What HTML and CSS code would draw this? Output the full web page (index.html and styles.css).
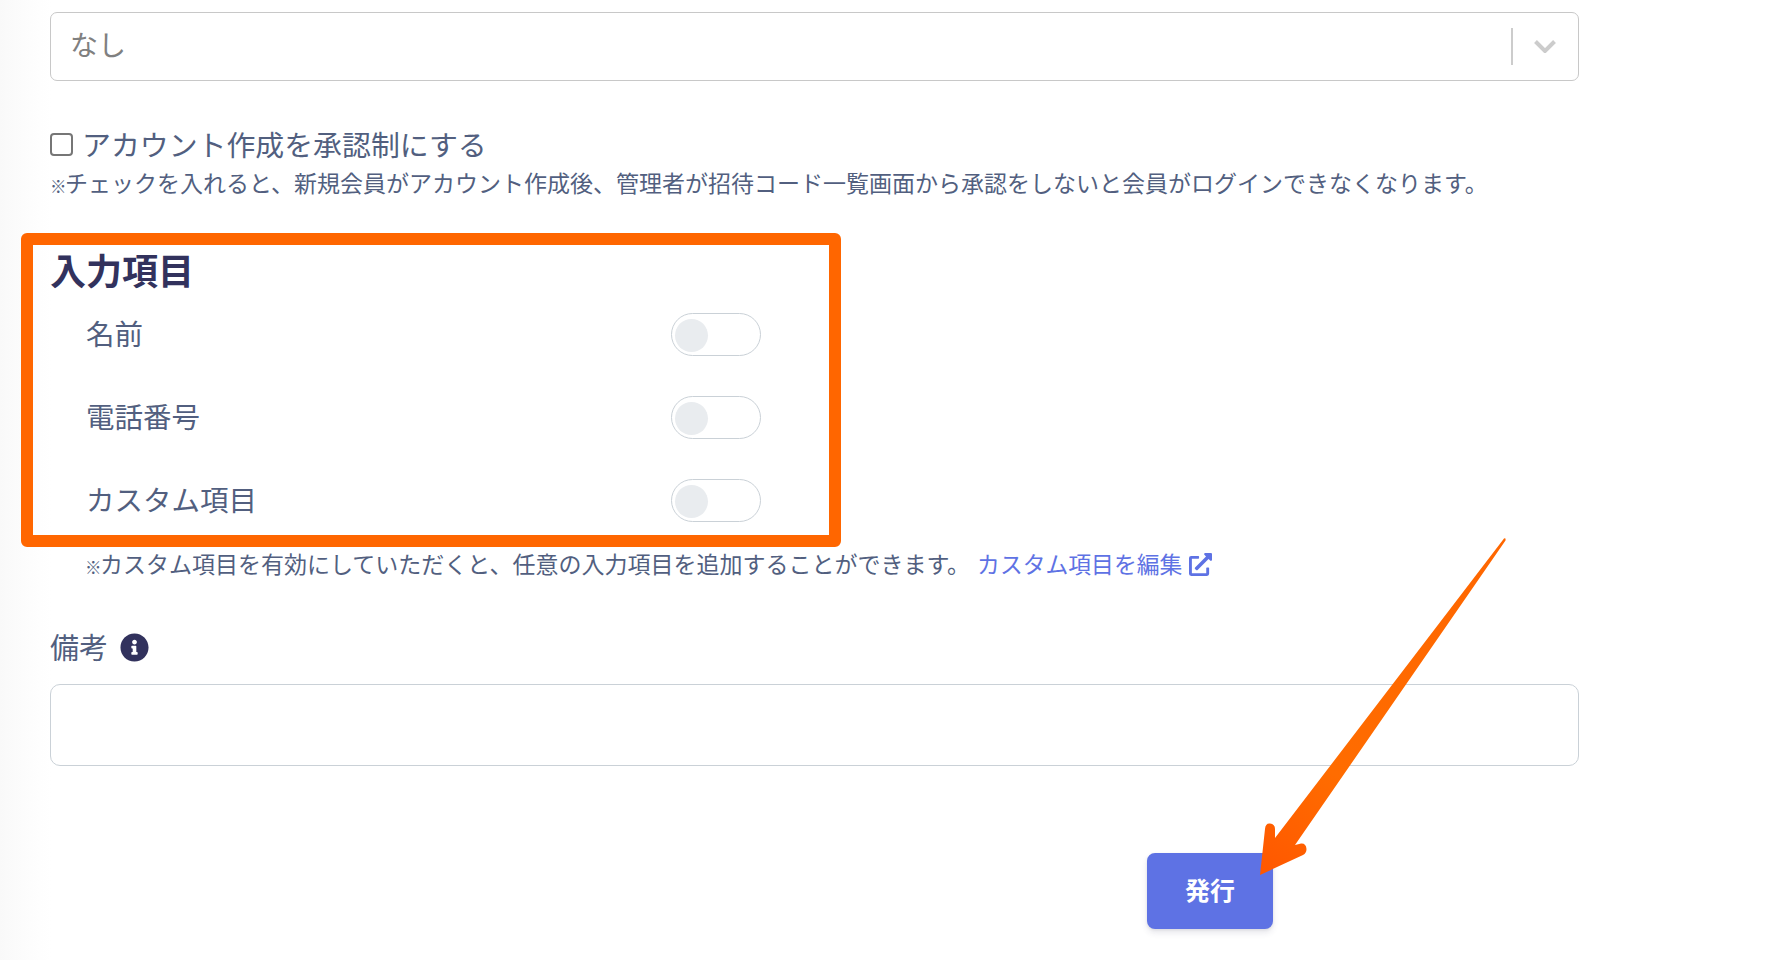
FILE: index.html
```html
<!DOCTYPE html>
<html lang="ja">
<head>
<meta charset="utf-8">
<title>招待コード発行</title>
<link rel="stylesheet" href="styles.css">
</head>
<body>
<main class="page">
  <form class="form">
    <div class="select">
      <span class="select-value">なし</span>
      <span class="select-divider"></span>
      <svg class="select-chevron" viewBox="0 0 22 13" aria-hidden="true"><path d="M1.500 1.500l9.500 9.500 9.500-9.500" fill="none" stroke="#cccccc" stroke-width="4"/></svg>
    </div>

    <label class="check-row">
      <input class="check" type="checkbox">
      <span class="check-text">アカウント作成を承認制にする</span>
    </label>
    <p class="note"><span class="mark">※</span>チェックを入れると、新規会員がアカウント作成後、管理者が招待コード一覧画面から承認をしないと会員がログインできなくなります。</p>

    <h2 class="heading">入力項目</h2>
    <div class="fields">
      <div class="field-row"><span class="field-name">名前</span><span class="toggle"><span class="knob"></span></span></div>
      <div class="field-row"><span class="field-name">電話番号</span><span class="toggle"><span class="knob"></span></span></div>
      <div class="field-row"><span class="field-name">カスタム項目</span><span class="toggle"><span class="knob"></span></span></div>
    </div>
    <p class="note note-indent"><span class="mark">※</span>カスタム項目を有効にしていただくと、任意の入力項目を追加することができます。<a class="link" href="#">カスタム項目を編集<svg class="link-icon" viewBox="0 0 512 512" aria-hidden="true"><path fill="currentColor" d="M432,320H400a16,16,0,0,0-16,16V448H64V128H208a16,16,0,0,0,16-16V80a16,16,0,0,0-16-16H48A48,48,0,0,0,0,112V464a48,48,0,0,0,48,48H400a48,48,0,0,0,48-48V336A16,16,0,0,0,432,320ZM488,0h-128c-21.37,0-32.05,25.91-17,41l35.73,35.73L135,320.37a24,24,0,0,0,0,34L157.67,377a24,24,0,0,0,34,0L435.28,133.32,471,169c15,15,41,4.5,41-17V24A24,24,0,0,0,488,0Z"/></svg></a></p>

    <div class="memo-label">
      <span class="memo-name">備考</span>
      <svg class="info-icon" viewBox="0 0 512 512" aria-hidden="true"><path fill="#32325d" d="M256 8C119.043 8 8 119.083 8 256c0 136.997 111.043 248 248 248s248-111.003 248-248C504 119.083 392.957 8 256 8zm0 110c23.196 0 42 18.804 42 42s-18.804 42-42 42-42-18.804-42-42 18.804-42 42-42zm56 254c0 6.627-5.373 12-12 12h-88c-6.627 0-12-5.373-12-12v-24c0-6.627 5.373-12 12-12h12v-64h-12c-6.627 0-12-5.373-12-12v-24c0-6.627 5.373-12 12-12h64c6.627 0 12 5.373 12 12v100h12c6.627 0 12 5.373 12 12v24z"/></svg>
    </div>
    <div class="memo-input"></div>

    <div class="actions">
      <button class="submit" type="button">発行</button>
    </div>
  </form>

  <div class="highlight"></div>
  <svg class="arrow" viewBox="0 0 1782 960" aria-hidden="true">
    <defs>
      <linearGradient id="arrowFill" gradientUnits="userSpaceOnUse" x1="1505" y1="539" x2="1260" y2="875">
        <stop offset="0" stop-color="#ff6600"/>
        <stop offset="0.7" stop-color="#ff6c00"/>
        <stop offset="1" stop-color="#ff5700"/>
      </linearGradient>
    </defs>
    <path fill="url(#arrowFill)" d="M1504 538.500Q1506 537.500 1505.500 540.500L1295 845L1301 843.500Q1306 843 1306.500 849Q1306.500 853 1303 855L1260 875L1265 829Q1265.500 823 1270 823.500Q1275 824 1275 829L1275 838Z"/>
  </svg>
</main>
</body>
</html>
```

FILE: styles.css
```css
* {
  box-sizing: border-box;
}

html,
body {
  margin: 0;
  height: 100%;
}

body {
  overflow: hidden;
  background: #ffffff;
  color: #525f7f;
  font-family: "Noto Sans CJK JP", "Noto Sans", sans-serif;
  font-size: 28.5px;
}

.page {
  position: relative;
  height: 960px;
  padding: 12px 0 0 50px;
  background: linear-gradient(90deg, #f9f9f9 0, #fbfbfb 14px, #fefefe 40px, #ffffff 52px);
}

.form {
  width: 1529px;
}

.select {
  display: flex;
  align-items: center;
  height: 69px;
  padding: 0 22px 0 19px;
  border: 1px solid #c8c8c8;
  border-radius: 7px;
  background: #ffffff;
}

.select-value {
  flex: 1;
  color: #808080;
  font-size: 28px;
  line-height: 62px;
  padding-bottom: 6px;
}

.select-divider {
  width: 2px;
  height: 37px;
  background: #cccccc;
}

.select-chevron {
  width: 22px;
  height: 13px;
  margin-left: 21px;
}

.check-row {
  display: flex;
  align-items: center;
  gap: 9px;
  margin-top: 49px;
  height: 28px;
  font-size: 28.9px;
}

.check-text {
  padding-bottom: 2px;
}

.check {
  appearance: none;
  flex: none;
  width: 23px;
  height: 23px;
  margin: 0;
  border: 2px solid #767676;
  border-radius: 4px;
  background: #ffffff;
}

.note {
  height: 34px;
  margin: 0;
  font-size: 23px;
  line-height: 34px;
  white-space: nowrap;
}

.mark {
  display: inline-block;
  width: 15px;
  font-size: 16.5px;
  font-weight: 700;
  line-height: 1;
  text-align: center;
  vertical-align: -1px;
}

.check-row + .note {
  margin-top: 7px;
}

.heading {
  margin: 48px 0 0;
  color: #32325d;
  font-size: 36px;
  font-weight: 700;
  line-height: 44px;
}

.fields {
  display: flex;
  flex-direction: column;
  gap: 40px;
  width: 711px;
  margin-top: 22px;
  padding-left: 36px;
}

.field-row {
  display: flex;
  align-items: center;
  justify-content: space-between;
  height: 43px;
}

.field-name {
  padding-bottom: 5px;
}

.toggle {
  display: block;
  width: 90px;
  height: 43px;
  padding: 5px 3px 3px;
  border: 1px solid #cad1d7;
  border-radius: 22px;
  background: #ffffff;
}

.knob {
  display: block;
  width: 33px;
  height: 33px;
  border-radius: 50%;
  background: #e9ecef;
}

.note-indent {
  margin-top: 24px;
  padding-left: 35px;
}

.link {
  margin-left: 7px;
  color: #5e72e4;
  font-size: 22.8px;
  text-decoration: none;
}

.link-icon {
  width: 23px;
  height: 23px;
  margin-left: 7px;
  vertical-align: -3px;
}

.memo-label {
  display: flex;
  align-items: center;
  gap: 12px;
  margin-top: 47px;
  height: 40px;
}

.memo-name {
  font-size: 29px;
  padding-bottom: 2px;
}

.info-icon {
  width: 29px;
  height: 29px;
}

.memo-input {
  height: 82px;
  margin-top: 17px;
  border: 1px solid #cad1d7;
  border-radius: 10px;
  background: #ffffff;
}

.actions {
  margin-top: 87px;
  padding-left: 1097px;
}

.submit {
  width: 126px;
  height: 76px;
  padding: 0 0 4px;
  border: 0;
  border-radius: 8px;
  background: #5e72e4;
  color: #ffffff;
  font: 700 25px "Noto Sans CJK JP", sans-serif;
  box-shadow: 0 4px 6px rgba(50, 50, 93, 0.11), 0 1px 3px rgba(0, 0, 0, 0.08);
}

.highlight {
  position: absolute;
  left: 21px;
  top: 233px;
  width: 820px;
  height: 314px;
  border: 12px solid #ff6600;
  border-radius: 6px;
  pointer-events: none;
}

.arrow {
  position: absolute;
  left: 0;
  top: 0;
  width: 1782px;
  height: 960px;
  pointer-events: none;
}
```
